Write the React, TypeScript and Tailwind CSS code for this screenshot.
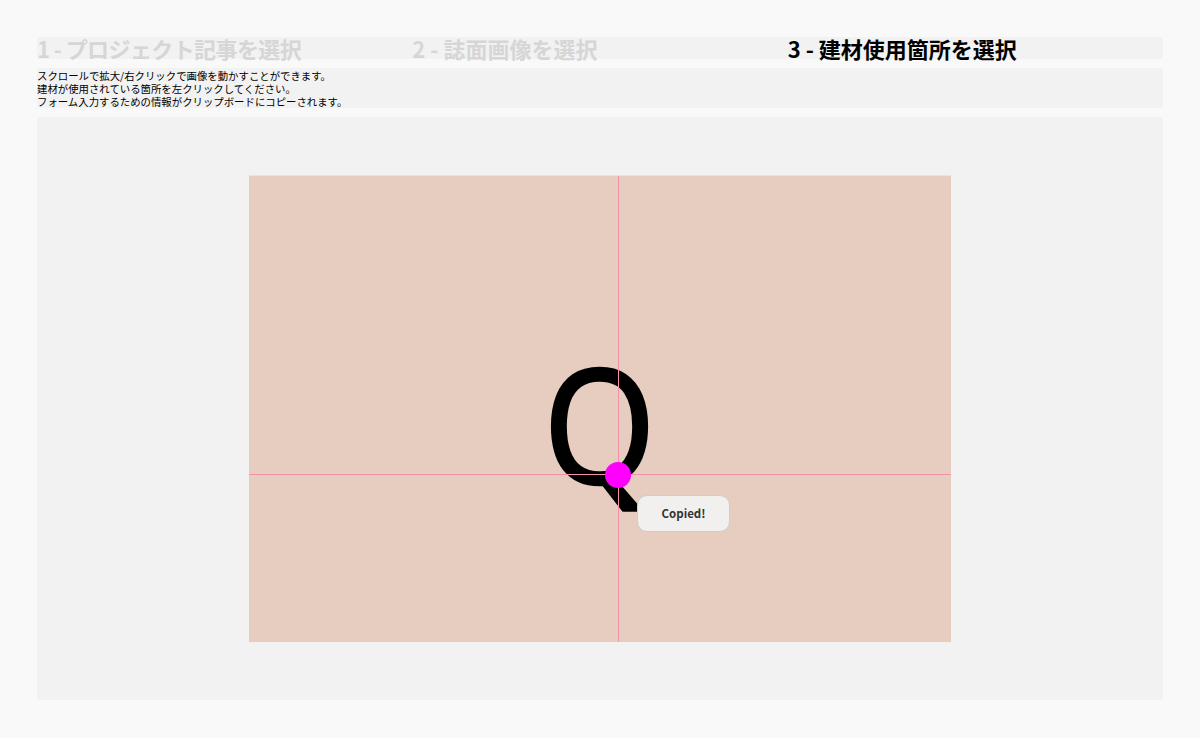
const steps = [
  { label: "1 - プロジェクト記事を選択", cls: "text-[#d6d6d6] tracking-[-0.6px]" },
  { label: "2 - 誌面画像を選択", cls: "text-[#d6d6d6]" },
  { label: "3 - 建材使用箇所を選択", cls: "text-black" },
];

export default function App() {
  return (
    <div className="min-h-screen bg-[#f9f9f9] px-[37px] pt-[37px] pb-[38px] font-['Noto_Sans_CJK_JP','Noto_Sans',sans-serif]">
      <div className="grid h-[22px] grid-cols-3 bg-[#f2f2f2]">
        {steps.map((s) => (
          <div key={s.label} className={`text-[22px] font-bold leading-[22px] whitespace-nowrap ${s.cls}`}>
            {s.label}
          </div>
        ))}
      </div>

      <div className="mt-[9px] h-[40px] bg-[#f2f2f2] pt-px text-[10.4px] leading-[13px] text-black">
        <p>スクロールで拡大/右クリックで画像を動かすことができます。</p>
        <p>建材が使用されている箇所を左クリックしてください。</p>
        <p>フォーム入力するための情報がクリップボードにコピーされます。</p>
      </div>

      <div className="mt-[9px] flex h-[583px] items-center justify-center bg-[#f2f2f2]">
        <div className="relative flex h-[467px] w-[702px] items-center justify-center overflow-hidden border-t border-[#ece2dc] bg-[#e6cdbf]">
          <span className="translate-x-[-1px] translate-y-[12px] scale-x-[0.9] select-none font-['Noto_Sans',sans-serif] text-[160px] font-normal leading-none text-black [-webkit-text-stroke:2.5px_black]">
            Q
          </span>
          {/* crosshair + click marker */}
          <div className="absolute top-0 left-[369px] h-full w-px bg-[#f590ad]" />
          <div className="absolute top-[298px] left-0 h-px w-full bg-[#f590ad]" />
          <div className="absolute top-[286px] left-[356px] h-[26px] w-[26px] rounded-full bg-[#ff00ff]" />
          <div className="absolute top-[319px] left-[388px] flex h-[37px] w-[93px] items-center justify-center rounded-[10px] border border-[#cfcccb] bg-[#f1f0ef] text-[11.5px] font-bold text-[#333]">
            Copied!
          </div>
        </div>
      </div>
    </div>
  );
}
